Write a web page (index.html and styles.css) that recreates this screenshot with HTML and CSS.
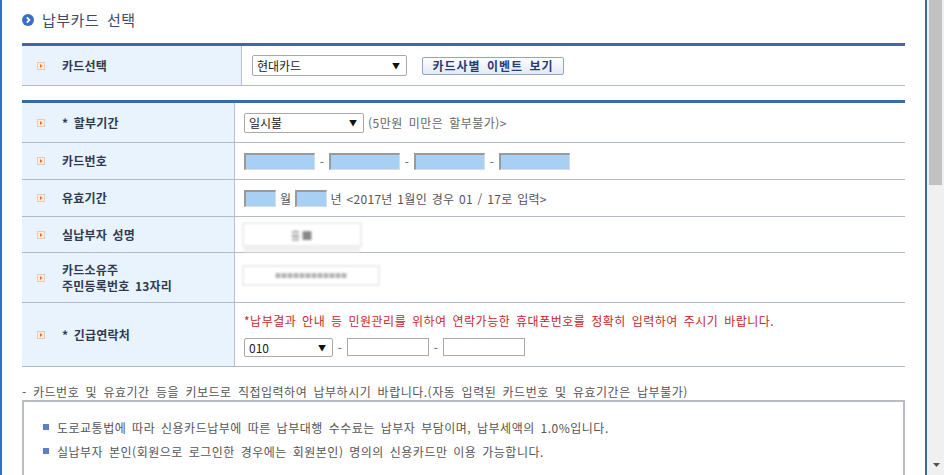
FILE: index.html
```html
<!DOCTYPE html>
<html lang="ko">
<head>
<meta charset="utf-8">
<title>납부카드 선택</title>
<link rel="stylesheet" href="styles.css">
</head>
<body>
<div class="frame">
  <div class="leftbar"></div>
  <main class="content">
    <h2 class="title">
      <svg class="title-icon" width="12" height="12" viewBox="0 0 12 12"><circle cx="6" cy="6" r="6" fill="#3b6fc6"/><path d="M4.8 3.3 L7.4 6 L4.8 8.7" fill="none" stroke="#fff" stroke-width="1.8"/></svg>
      <span>납부카드 선택</span>
    </h2>

    <div class="form-grid grid-one">
      <div class="th"><svg class="bullet-icon" width="8" height="8" viewBox="0 0 8 8"><rect x="0.5" y="0.5" width="7" height="7" fill="#fbece2" stroke="#e6cbbb"/><path d="M3 2 L5.5 4 L3 6 Z" fill="#e2701e"/></svg><span>카드선택</span></div>
      <div class="td">
        <div class="fake-select sel-card"><span>현대카드</span><span class="caret">▼</span></div>
        <button class="event-btn" type="button">카드사별 이벤트 보기</button>
      </div>
    </div>

    <div class="form-grid grid-two">
      <div class="th"><svg class="bullet-icon" width="8" height="8" viewBox="0 0 8 8"><rect x="0.5" y="0.5" width="7" height="7" fill="#fbece2" stroke="#e6cbbb"/><path d="M3 2 L5.5 4 L3 6 Z" fill="#e2701e"/></svg><span>* 할부기간</span></div>
      <div class="td">
        <div class="fake-select sel-month"><span>일시불</span><span class="caret">▼</span></div>
        <span class="hint">(5만원 미만은 할부불가)&gt;</span>
      </div>

      <div class="th"><svg class="bullet-icon" width="8" height="8" viewBox="0 0 8 8"><rect x="0.5" y="0.5" width="7" height="7" fill="#fbece2" stroke="#e6cbbb"/><path d="M3 2 L5.5 4 L3 6 Z" fill="#e2701e"/></svg><span>카드번호</span></div>
      <div class="td">
        <span class="blue-input w-card"></span><span class="dash">-</span>
        <span class="blue-input w-card"></span><span class="dash">-</span>
        <span class="blue-input w-card"></span><span class="dash">-</span>
        <span class="blue-input w-card"></span>
      </div>

      <div class="th"><svg class="bullet-icon" width="8" height="8" viewBox="0 0 8 8"><rect x="0.5" y="0.5" width="7" height="7" fill="#fbece2" stroke="#e6cbbb"/><path d="M3 2 L5.5 4 L3 6 Z" fill="#e2701e"/></svg><span>유효기간</span></div>
      <div class="td">
        <span class="blue-input w-exp"></span><span class="unit unit-m">월</span>
        <span class="blue-input w-exp"></span><span class="unit unit-y">년 &lt;2017년 1월인 경우 01 / 17로 입력&gt;</span>
      </div>

      <div class="th"><svg class="bullet-icon" width="8" height="8" viewBox="0 0 8 8"><rect x="0.5" y="0.5" width="7" height="7" fill="#fbece2" stroke="#e6cbbb"/><path d="M3 2 L5.5 4 L3 6 Z" fill="#e2701e"/></svg><span>실납부자 성명</span></div>
      <div class="td td-blur">
        <div class="masked masked-name"><span class="masked-text">홍■</span></div>
      </div>

      <div class="th"><svg class="bullet-icon" width="8" height="8" viewBox="0 0 8 8"><rect x="0.5" y="0.5" width="7" height="7" fill="#fbece2" stroke="#e6cbbb"/><path d="M3 2 L5.5 4 L3 6 Z" fill="#e2701e"/></svg><span>카드소유주<br>주민등록번호 13자리</span></div>
      <div class="td td-blur">
        <div class="masked masked-id"><span class="masked-text light">■■■■■■■■■■■■</span></div>
      </div>

      <div class="th"><svg class="bullet-icon" width="8" height="8" viewBox="0 0 8 8"><rect x="0.5" y="0.5" width="7" height="7" fill="#fbece2" stroke="#e6cbbb"/><path d="M3 2 L5.5 4 L3 6 Z" fill="#e2701e"/></svg><span>* 긴급연락처</span></div>
      <div class="td td-phone">
        <p class="warn">*납부결과 안내 등 민원관리를 위하여 연락가능한 휴대폰번호를 정확히 입력하여 주시기 바랍니다.</p>
        <div class="phone-row">
          <div class="fake-select sel-phone"><span>010</span><span class="caret">▼</span></div>
          <span class="dash">-</span>
          <span class="white-input"></span>
          <span class="dash">-</span>
          <span class="white-input"></span>
        </div>
      </div>
    </div>

    <p class="note">- 카드번호 및 유효기간 등을 키보드로 직접입력하여 납부하시기 바랍니다.(자동 입력된 카드번호 및 유효기간은 납부불가)</p>

    <div class="info-box">
      <ul>
        <li>도로교통법에 따라 신용카드납부에 따른 납부대행 수수료는 납부자 부담이며, 납부세액의 1.0%입니다.</li>
        <li>실납부자 본인(회원으로 로그인한 경우에는 회원본인) 명의의 신용카드만 이용 가능합니다.</li>
      </ul>
    </div>
  </main>
  <div class="vline"></div>
  <div class="scrollbar">
    <div class="thumb"></div>
    <svg class="arrow" width="7" height="4" viewBox="0 0 7 4"><path d="M0 0 H7 L3.5 4 Z" fill="#505050"/></svg>
  </div>
</div>
</body>
</html>
```
FILE: styles.css
```css
* { box-sizing: border-box; }
html, body { margin: 0; padding: 0; background: #fff; }
body {
  font-family: "Noto Sans CJK KR", "Noto Sans", sans-serif;
  font-size: 12px;
  color: #555;
  word-spacing: 2px;
  letter-spacing: 0.5px;
}
.frame {
  display: flex;
  width: 944px;
  height: 475px;
  overflow: hidden;
}
.leftbar { width: 2px; background: #2b72d0; flex: none; }
.content {
  flex: 1;
  padding: 0 20px;
  min-width: 0;
}
.vline { width: 2px; background: #3f6a95; flex: none; }
.scrollbar {
  width: 17px;
  flex: none;
  background: #f0f0f0;
  display: flex;
  flex-direction: column;
  justify-content: space-between;
  align-items: center;
  padding-bottom: 8px;
}
.thumb { width: 13px; height: 185px; background: #c1c1c1; margin-left: 2px; align-self: flex-start; }
.arrow { display: block; margin-left: 1px; }

.title {
  margin: 0;
  height: 43px;
  padding-bottom: 4px;
  display: flex;
  align-items: center;
  gap: 8px;
  font-size: 15px;
  font-weight: normal;
  color: #3b4a6e;
  word-spacing: 3px;
  letter-spacing: 0.5px;
}
.title-icon { display: block; }

.form-grid {
  display: grid;
  border-top: 3px solid #3d69a7;
}
.grid-one { grid-template-columns: 220px 1fr; grid-template-rows: 40px; }
.grid-two {
  margin-top: 14px;
  grid-template-columns: 213px 1fr;
  grid-template-rows: 40px 37px 37px 36px 50px 64px;
}
.th {
  background: #e9f3fd;
  border-right: 1px solid #b5c1d0;
  border-bottom: 1px solid #b3bac5;
  display: flex;
  align-items: center;
  padding-left: 15px;
  gap: 17px;
  color: #2f3a50;
  font-weight: bold;
  line-height: 16px;
  word-spacing: 2px;
  letter-spacing: 0.2px;
}
.bullet-icon { display: block; flex: none; }
.td {
  border-bottom: 1px solid #b3bac5;
  display: flex;
  align-items: center;
  padding-left: 9px;
}
.grid-one .td { padding-left: 10px; }

.fake-select {
  display: flex;
  align-items: center;
  justify-content: space-between;
  border: 1px solid #a9a9a9;
  border-radius: 2px;
  background: #fff;
  color: #222;
  padding: 0 6px 0 4px;
  letter-spacing: 0;
}
.caret { font-size: 8px; color: #111; }
.sel-card { width: 155px; height: 21px; }
.sel-month { width: 120px; height: 20px; }
.sel-phone { width: 89px; height: 19px; }

.event-btn {
  margin-left: 15px;
  width: 142px;
  height: 18px;
  padding: 0;
  border: 1px solid #8ea6c8;
  border-radius: 2px;
  background: linear-gradient(#fdfeff, #e2eaf5);
  font-family: inherit;
  font-size: 12px;
  font-weight: bold;
  color: #1f3d7c;
  letter-spacing: 1px;
  word-spacing: 2px;
  line-height: 16px;
}
.hint { margin-left: 4px; color: #666; }

.blue-input {
  display: inline-block;
  height: 17px;
  background: #a8d0f5;
  border-top: 2px solid #9a9a9a;
  border-left: 2px solid #9a9a9a;
  border-right: 1px solid #d8dde3;
  border-bottom: 1px solid #d8dde3;
}
.w-card { width: 71px; }
.w-exp { width: 32px; }
.dash { width: 14px; text-align: center; color: #666; }
.unit { color: #555; }
.unit-m { margin: 0 3px 0 4px; }
.unit-y { margin-left: 4px; word-spacing: 1px; letter-spacing: 0.3px; }

.td-blur { padding-left: 7px; }
.masked {
  display: flex;
  align-items: center;
  justify-content: center;
  border: 2px solid #ececec;
  filter: blur(1.3px);
  background: #fff;
}
.masked-name { width: 120px; height: 25px; box-shadow: 0 7px 0 -2px #f0f0f0; }
.masked-id { width: 138px; height: 21px; margin-top: -4px; }
.masked-text { color: #888; font-size: 11px; letter-spacing: 1px; word-spacing: 0; }
.masked-text.light { color: #b0b0b0; font-size: 6px; letter-spacing: 0; }

.td-phone {
  flex-direction: column;
  align-items: flex-start;
  justify-content: center;
  gap: 9px;
}
.warn { margin: 0; color: #c8262b; line-height: 16px; }
.phone-row { display: flex; align-items: center; }
.white-input {
  display: inline-block;
  width: 82px;
  height: 18px;
  border: 1px solid #a9a9a9;
  background: #fff;
}

.note {
  margin: 17px 0 0;
  line-height: 16px;
  color: #555;
  word-spacing: 2.5px;
}
.info-box {
  border: 2px solid #b9bdc3;
  height: 120px;
  padding: 14px 0 0 19px;
}
.info-box ul { margin: 0; padding: 0; list-style: none; }
.info-box li {
  display: flex;
  align-items: center;
  gap: 8px;
  line-height: 24px;
  color: #555;
}
.info-box li::before {
  content: "";
  width: 6px;
  height: 6px;
  background: #5a7fc2;
  flex: none;
  margin-top: -3px;
}
```
